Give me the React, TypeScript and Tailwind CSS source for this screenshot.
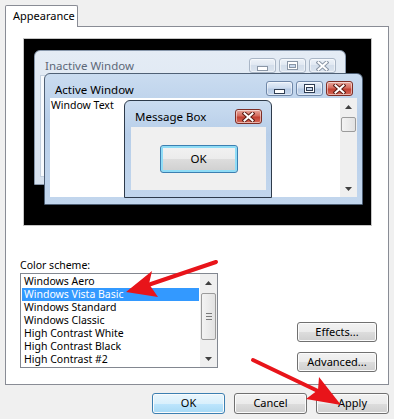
import React from 'react';

const schemes = [
  'Windows Aero',
  'Windows Vista Basic',
  'Windows Standard',
  'Windows Classic',
  'High Contrast White',
  'High Contrast Black',
  'High Contrast #2',
];

function Glyph({ kind, dim }: { kind: 'min' | 'max' | 'close'; dim?: boolean }) {
  const ink = dim ? '#8a96a6' : '#2f3d52';
  if (kind === 'min')
    return (
      <svg width="11" height="5" className="mt-[5px]">
        <rect x="0.5" y="0.5" width="10" height="4" fill="#fff" stroke={ink} />
      </svg>
    );
  if (kind === 'max')
    return (
      <svg width="11" height="9">
        <rect x="0.5" y="0.5" width="10" height="8" fill="#fff" stroke={ink} />
        <rect x="2.5" y="3.5" width="6" height="3" fill="#c9d9ee" stroke={ink} />
      </svg>
    );
  return (
    <svg width="13" height="10">
      <path d="M2.5 1.5 L10.5 8.5 M10.5 1.5 L2.5 8.5" stroke={dim ? '#8a96a6' : '#5c1c14'} strokeWidth="4" strokeLinecap="square" />
      <path d="M2.5 1.5 L10.5 8.5 M10.5 1.5 L2.5 8.5" stroke="#fff" strokeWidth="2" strokeLinecap="square" />
    </svg>
  );
}

function CapBtn({ kind, dim }: { kind: 'min' | 'max' | 'close'; dim?: boolean }) {
  let look = 'border-[#6f87a8] bg-[linear-gradient(#e6eef8,#cddcef_45%,#b6cae4_55%,#c3d5ec)]';
  if (dim) look = 'border-[#a9b6c6] bg-[linear-gradient(#eef3f9,#dfe7f1_50%,#d3deeb_50%,#dbe4ef)]';
  else if (kind === 'close') look = 'border-[#7d2e26] bg-[linear-gradient(#e9a99e,#d46a5c_45%,#c23f31_55%,#d56b5b)]';
  return (
    <div className={`w-[27px] h-[15px] rounded-[3px] border flex items-center justify-center shadow-[inset_0_0_0_1px_rgba(255,255,255,0.5)] ${look}`}>
      <Glyph kind={kind} dim={dim} />
    </div>
  );
}

function UpArrow() {
  return (
    <svg width="7" height="4">
      <path d="M3.5 0 L7 4 L0 4 Z" fill="#404040" />
    </svg>
  );
}

function DownArrow() {
  return (
    <svg width="7" height="4">
      <path d="M0 0 L7 0 L3.5 4 Z" fill="#404040" />
    </svg>
  );
}

function Button({ label, kind }: { label: string; kind?: 'default' }) {
  const look =
    kind === 'default'
      ? 'border-[#3c7fb1] bg-[linear-gradient(#eaf6fd,#d9f0fc_50%,#bee6fd_50%,#a7d9f5)]'
      : 'border-[#707070] bg-[linear-gradient(#f2f2f2,#ebebeb_50%,#dddddd_50%,#cfcfcf)]';
  return (
    <div className={`h-[21px] w-[73px] rounded-[3px] border flex items-center justify-center text-[11px] shadow-[inset_0_0_0_1px_#fbfbfb] ${look}`}>
      {label}
    </div>
  );
}

export default function App() {
  return (
    <div className="relative w-[394px] h-[419px] overflow-hidden bg-[#f0f0f0] px-[5px] pt-[5px] font-['Noto_Sans',sans-serif] text-[10.5px] text-black">
      {/* Tab */}
      <div className="flex">
        <div className="relative z-10 -mb-px h-[22px] w-[73px] bg-white border border-b-0 border-[#898c95] rounded-t-[2px] pl-[7px] flex items-center text-[11px]">
          Appearance
        </div>
      </div>

      {/* Tab panel */}
      <div className="h-[359px] bg-white border border-[#898c95] pt-[11px]">
        {/* Preview */}
        <div className="relative ml-[17px] w-[349px] h-[188px] border border-[#c6c6c6] bg-black">
          {/* Inactive window */}
          <div className="absolute left-[10px] top-[11px] w-[312px] h-[135px] flex flex-col rounded-t-[6px] border border-[#8797ab] bg-[linear-gradient(#e4ecf5,#d6e1ee)]">
            <div className="flex h-[24px] shrink-0 pt-[7px] pl-[10px] pr-[9px]">
              <span className="text-[11.5px] leading-[15px] text-[#5d6878]">Inactive Window</span>
              <div className="ml-auto flex gap-[3px]">
                <CapBtn kind="min" dim />
                <CapBtn kind="max" dim />
                <CapBtn kind="close" dim />
              </div>
            </div>
            <div className="flex-1 mx-[5px] mb-[7px] bg-[#f7fafd] border border-[#c4d1e0]" />
          </div>

          {/* Active window */}
          <div className="absolute left-[20px] top-[34px] w-[319px] h-[132px] flex flex-col rounded-t-[6px] border border-[#4f6075] bg-[linear-gradient(#cadcf0,#b7cee9_35%,#c2d6ed)]">
            <div className="flex h-[24px] shrink-0 pt-[7px] pl-[10px] pr-[9px]">
              <span className="text-[11.5px] leading-[15px] mt-[1px]">Active Window</span>
              <div className="ml-auto flex gap-[3px]">
                <CapBtn kind="min" />
                <CapBtn kind="max" />
                <CapBtn kind="close" />
              </div>
            </div>
            <div className="flex flex-1 mx-[5px] mb-[7px] bg-white">
              <span className="pl-[1px] leading-[14px]">Window Text</span>
              <div className="ml-auto w-[17px] flex flex-col items-center bg-[#efefef]">
                <div className="h-[17px] flex items-center justify-center">
                  <UpArrow />
                </div>
                <div className="mt-[2px] w-[15px] h-[15px] rounded-[2px] border border-[#9b9b9b] bg-[linear-gradient(90deg,#f3f3f3,#e2e2e2)]" />
                <div className="mt-auto h-[17px] flex items-center justify-center">
                  <DownArrow />
                </div>
              </div>
            </div>
          </div>

          {/* Message box */}
          <div className="absolute left-[100px] top-[61px] w-[148px] h-[98px] flex flex-col rounded-t-[6px] border border-[#2e3b4b] bg-[linear-gradient(#cadcf0,#b7cee9_35%,#c2d6ed)]">
            <div className="flex h-[26px] shrink-0 pt-[8px] pl-[10px] pr-[9px]">
              <span className="text-[11.5px] leading-[15px]">Message Box</span>
              <div className="ml-auto">
                <CapBtn kind="close" />
              </div>
            </div>
            <div className="flex flex-1 justify-center ml-[6px] mr-[5px] mb-[7px] bg-[#f0f0f0] pt-[18px]">
              <div className="w-[78px] h-[28px] rounded-[3px] border border-[#3c7fb1] shadow-[inset_0_0_0_2px_#8fdcf6] bg-[linear-gradient(#f2f2f2,#ebebeb_50%,#dddddd_50%,#cfcfcf)] flex items-center justify-center text-[11.5px]">
                OK
              </div>
            </div>
          </div>
        </div>

        {/* Color scheme */}
        <div className="mt-[32px] ml-[14px] leading-[15px]">Color scheme:</div>
        <div className="flex items-start">
          <div className="ml-[14px] w-[198px] h-[95px] flex border border-[#828790] bg-white">
            <div className="flex-1 p-[1px]">
              {schemes.map((s) => (
                <div
                  key={s}
                  className={`h-[13px] leading-[13px] pl-[2px] whitespace-nowrap ${s === 'Windows Vista Basic' ? 'bg-[#3399ff] text-white' : ''}`}
                >
                  {s}
                </div>
              ))}
            </div>
            <div className="w-[17px] flex flex-col items-center bg-[#efefef]">
              <div className="h-[17px] flex items-center justify-center">
                <UpArrow />
              </div>
              <div className="mt-[2px] w-[15px] h-[47px] rounded-[2px] border border-[#9b9b9b] bg-[linear-gradient(90deg,#f3f3f3,#e2e2e2)] flex flex-col items-center justify-center gap-[2px]">
                <div className="w-[6px] h-px bg-[#7a7a7a]" />
                <div className="w-[6px] h-px bg-[#7a7a7a]" />
                <div className="w-[6px] h-px bg-[#7a7a7a]" />
              </div>
              <div className="mt-auto h-[17px] flex items-center justify-center">
                <DownArrow />
              </div>
            </div>
          </div>
          <div className="ml-auto mr-[11px] mt-[49px] flex flex-col gap-[10px]">
            <div className="h-[20px] w-[80px] rounded-[3px] border border-[#707070] shadow-[inset_0_0_0_1px_#fbfbfb] bg-[linear-gradient(#f2f2f2,#ebebeb_50%,#dddddd_50%,#cfcfcf)] flex items-center justify-center text-[11px]">
              Effects...
            </div>
            <div className="h-[20px] w-[80px] rounded-[3px] border border-[#707070] shadow-[inset_0_0_0_1px_#fbfbfb] bg-[linear-gradient(#f2f2f2,#ebebeb_50%,#dddddd_50%,#cfcfcf)] flex items-center justify-center text-[11px]">
              Advanced...
            </div>
          </div>
        </div>
      </div>

      {/* Dialog buttons */}
      <div className="mt-[8px] flex justify-end gap-[9px]">
        <Button label="OK" kind="default" />
        <Button label="Cancel" />
        <Button label="Apply" />
      </div>

      {/* Red annotation arrows */}
      <svg className="absolute inset-0 pointer-events-none" width="394" height="419" viewBox="0 0 394 419">
        <line x1="216" y1="262" x2="148" y2="285" stroke="#e8141a" strokeWidth="4" strokeLinecap="round" />
        <polygon points="126,292 158,297 149,284 152,271" fill="#e8141a" />
        <line x1="253" y1="360" x2="320" y2="392" stroke="#e8141a" strokeWidth="4" strokeLinecap="round" />
        <polygon points="341,405 306,399 318,390 319,377" fill="#e8141a" />
      </svg>
    </div>
  );
}
